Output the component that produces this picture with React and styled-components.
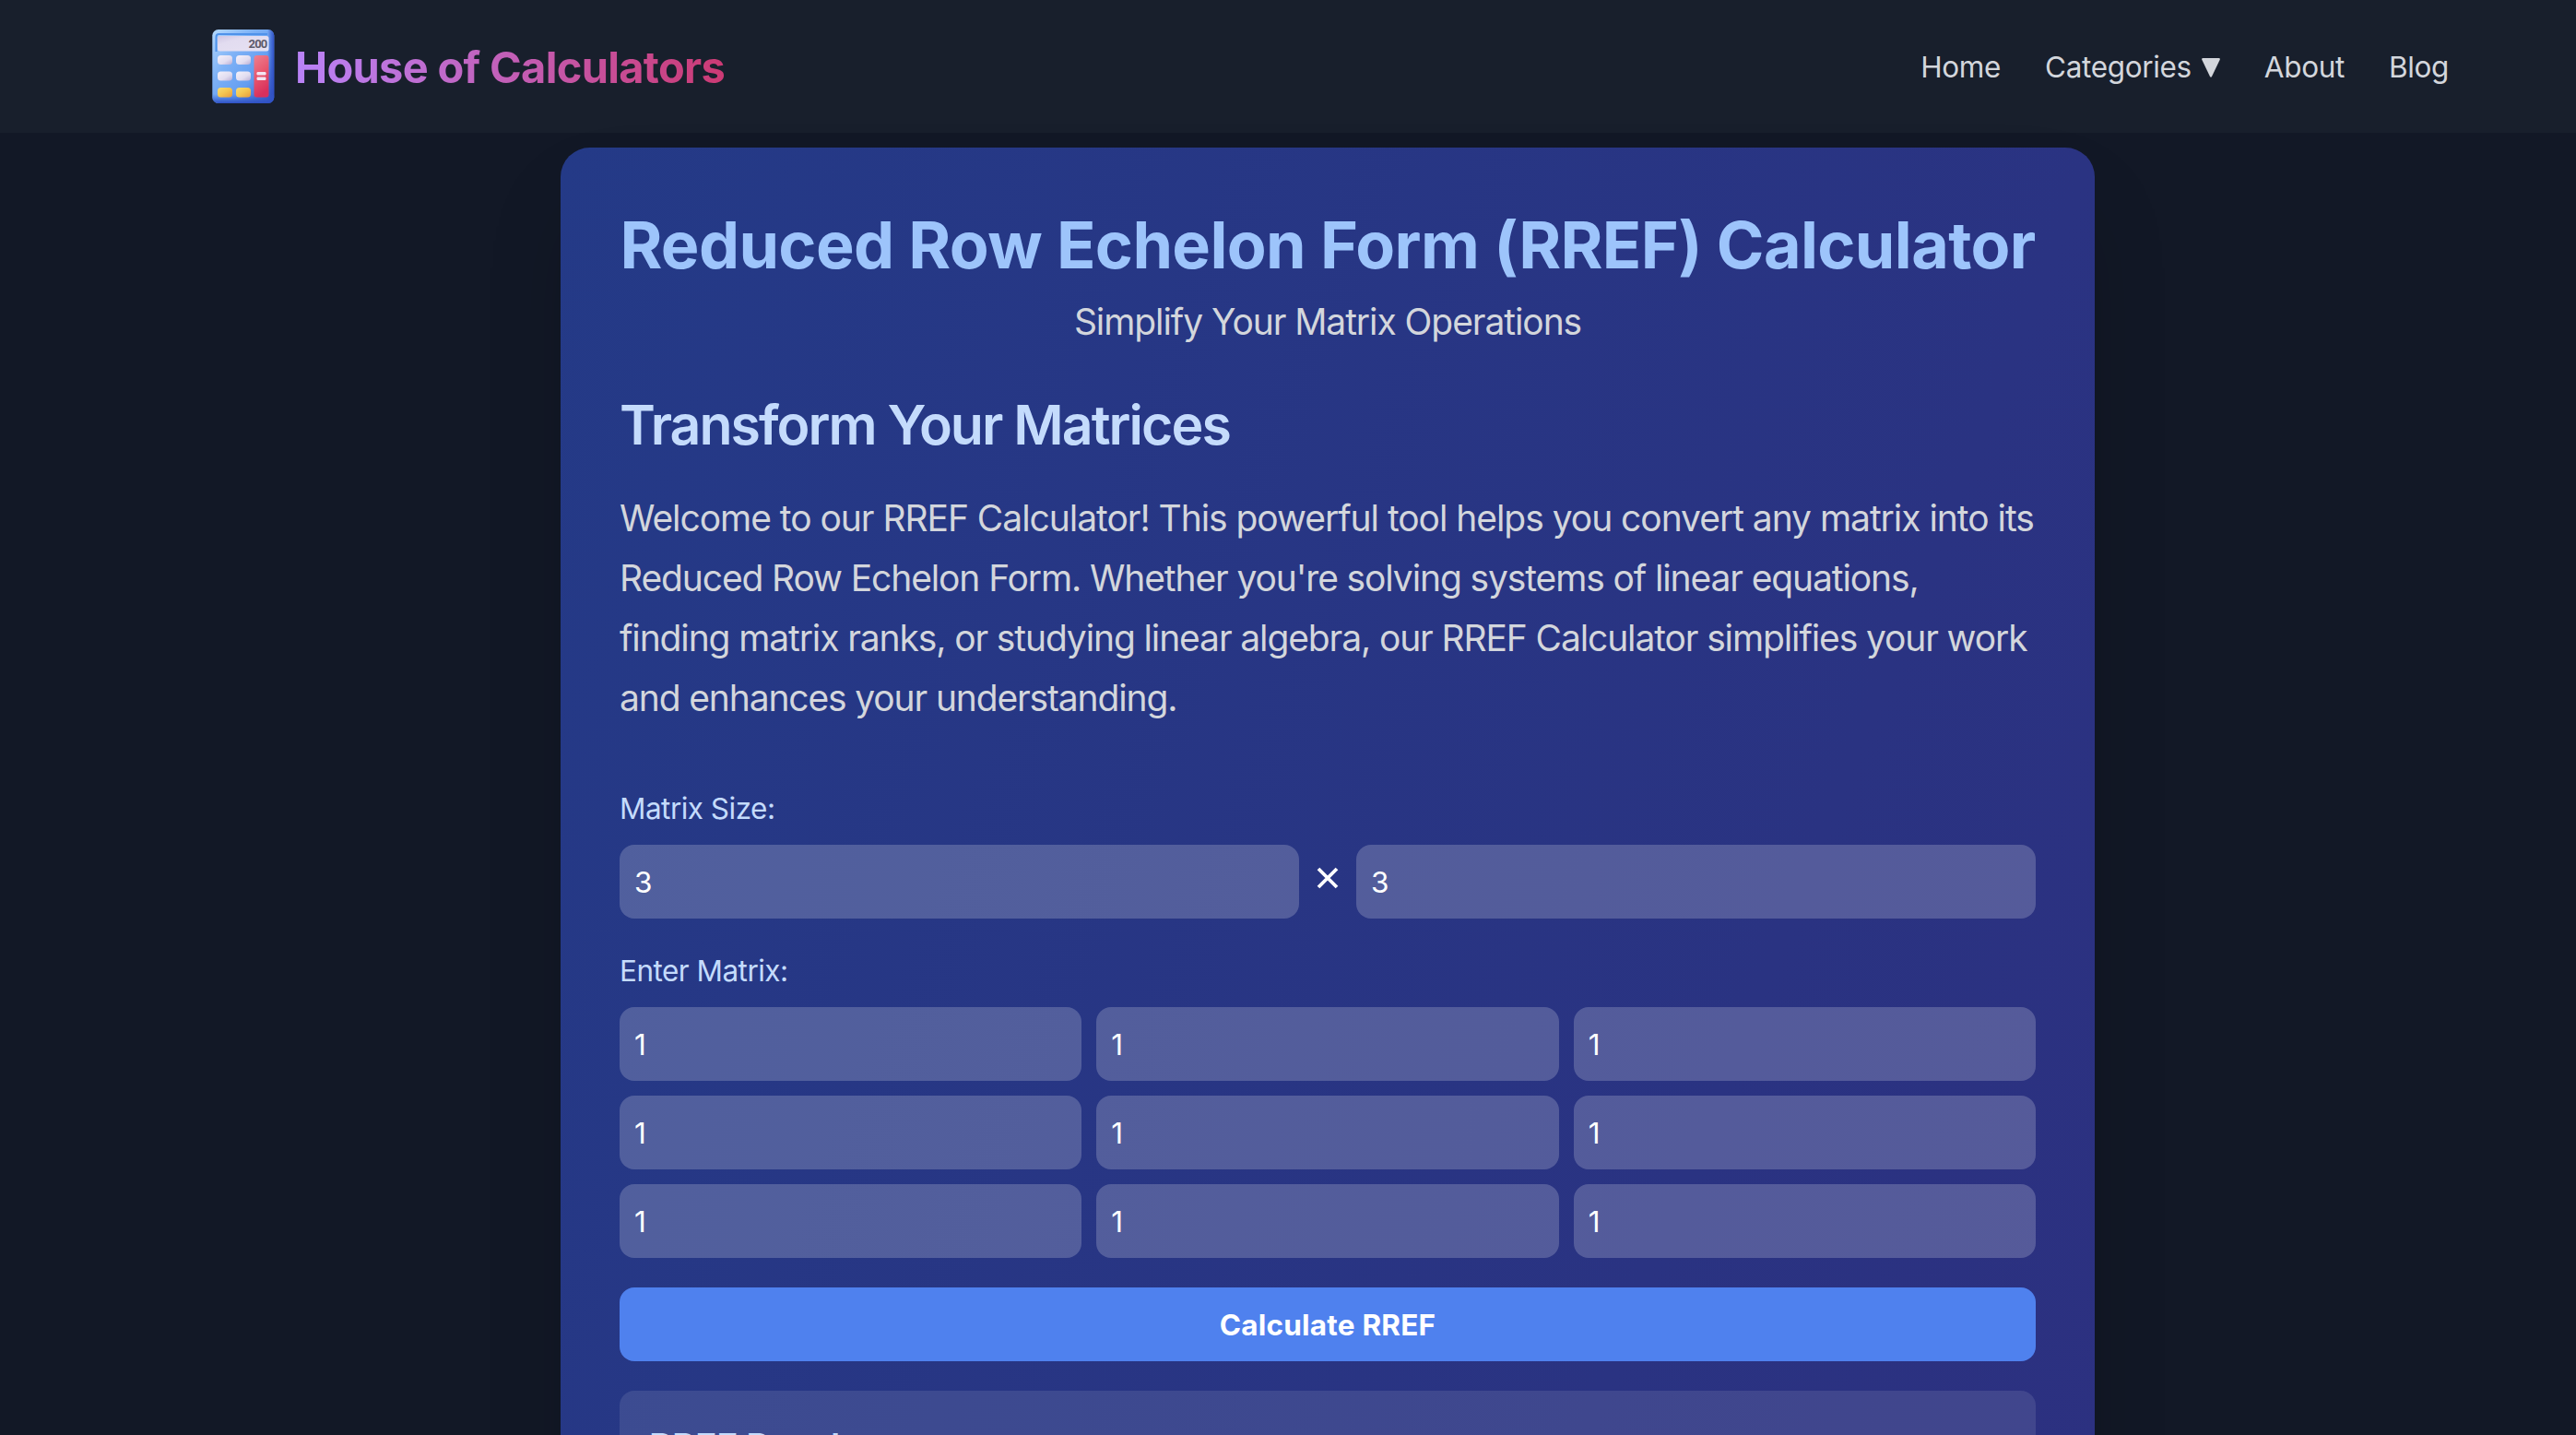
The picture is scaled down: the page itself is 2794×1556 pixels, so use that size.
import React, { useState } from "react";
import styled, { createGlobalStyle } from "styled-components";

const NAV_ITEMS = ["Home", "Categories", "About", "Blog"];

const makeMatrix = (rows, cols) =>
  Array.from({ length: rows }, () => Array(cols).fill("1"));

const CalculatorLogo = () => (
  <svg width="80" height="80" viewBox="0 0 80 80">
    <defs>
      <linearGradient id="body" x1="0" y1="0" x2="1" y2="1">
        <stop offset="0" stopColor="#b4d9fd" />
        <stop offset="0.35" stopColor="#7db1f6" />
        <stop offset="0.65" stopColor="#639df1" />
        <stop offset="1" stopColor="#2c45b8" />
      </linearGradient>
      <linearGradient id="edge" x1="0" y1="0" x2="1" y2="0">
        <stop offset="0" stopColor="#2f4fc4" stopOpacity="0" />
        <stop offset="1" stopColor="#2f4fc4" />
      </linearGradient>
      <linearGradient id="base" x1="0" y1="0" x2="0" y2="1">
        <stop offset="0" stopColor="#3560d0" stopOpacity="0" />
        <stop offset="1" stopColor="#2f50c4" />
      </linearGradient>
      <linearGradient id="screen" x1="0" y1="0" x2="1" y2="1">
        <stop offset="0" stopColor="#cfc6e4" />
        <stop offset="0.3" stopColor="#e2dcf0" />
        <stop offset="1" stopColor="#e6e1f2" />
      </linearGradient>
      <linearGradient id="key" x1="0" y1="0" x2="1" y2="1">
        <stop offset="0" stopColor="#f4f1fb" />
        <stop offset="0.6" stopColor="#e2ddf0" />
        <stop offset="1" stopColor="#b9aed6" />
      </linearGradient>
      <linearGradient id="gold" x1="0" y1="0" x2="1" y2="1">
        <stop offset="0" stopColor="#f7dc72" />
        <stop offset="0.5" stopColor="#f4c550" />
        <stop offset="1" stopColor="#e79a3c" />
      </linearGradient>
      <linearGradient id="equals" x1="0" y1="0" x2="0.3" y2="1">
        <stop offset="0" stopColor="#ee8090" />
        <stop offset="0.5" stopColor="#e8586f" />
        <stop offset="1" stopColor="#d8305c" />
      </linearGradient>
    </defs>
    <rect x="6.3" y="0" width="67" height="80" rx="6.5" fill="url(#body)" />
    <path d="M66 0h.8a6.5 6.5 0 0 1 6.5 6.5v67a6.5 6.5 0 0 1-6.5 6.5H66z" fill="url(#edge)" />
    <path d="M6.3 70h67v3.5a6.5 6.5 0 0 1-6.5 6.5h-54a6.5 6.5 0 0 1-6.5-6.5z" fill="url(#base)" />
    <path d="M10.5 24V8q0-3 3-3H66" fill="none" stroke="#4f92ea" strokeWidth="2" />
    <rect x="12" y="7" width="55.5" height="16.5" rx="2.5" fill="url(#screen)" />
    <text x="65.5" y="20" textAnchor="end">200</text>
    <rect x="12" y="28" width="16" height="10" rx="3.5" fill="url(#key)" />
    <rect x="32" y="28" width="16" height="10" rx="3.5" fill="url(#key)" />
    <rect x="12" y="45.5" width="16" height="10" rx="3.5" fill="url(#key)" />
    <rect x="32" y="45.5" width="16" height="10" rx="3.5" fill="url(#key)" />
    <rect x="12" y="63" width="16" height="10.5" rx="3.5" fill="url(#gold)" />
    <rect x="32" y="63" width="16" height="10.5" rx="3.5" fill="url(#gold)" />
    <rect x="51.5" y="28" width="16" height="45.5" rx="3" fill="url(#equals)" />
    <rect x="54.5" y="46" width="10" height="3.5" rx="1.2" fill="#f3e4f2" />
    <rect x="54.5" y="51.5" width="10" height="3.5" rx="1.2" fill="#f3e4f2" />
  </svg>
);

const App = () => {
  const [rows, setRows] = useState(3);
  const [cols, setCols] = useState(3);
  const [matrix, setMatrix] = useState(makeMatrix(3, 3));

  const resize = (nextRows, nextCols) => {
    setRows(nextRows);
    setCols(nextCols);
    setMatrix(makeMatrix(Number(nextRows) || 0, Number(nextCols) || 0));
  };

  const updateCell = (row, col, value) => {
    setMatrix((prev) =>
      prev.map((cells, r) =>
        cells.map((cell, c) => (r === row && c === col ? value : cell))
      )
    );
  };

  return (
    <Page>
      <GlobalStyle />
      <Header>
        <Brand>
          <CalculatorLogo />
          <BrandName>House of Calculators</BrandName>
        </Brand>
        <Nav>
          {NAV_ITEMS.map((item) => (
            <NavLink key={item}>
              {item}
              {item === "Categories" && (
                <svg width="20" height="21" viewBox="0 0 20 21">
                  <path
                    d="M1.5 0h17q2 0 1.1 2L11 20q-1 1.6-2 0L.4 2Q-.5 0 1.5 0z"
                    fill="currentColor"
                  />
                </svg>
              )}
            </NavLink>
          ))}
        </Nav>
      </Header>
      <Card>
        <Title>Reduced Row Echelon Form (RREF) Calculator</Title>
        <Subtitle>Simplify Your Matrix Operations</Subtitle>
        <Heading>Transform Your Matrices</Heading>
        <Intro>
          <IntroLine $tracking={-1.04}>
            Welcome to our RREF Calculator! This powerful tool helps you convert any matrix into its
          </IntroLine>
          <IntroLine $tracking={-1.12}>
            Reduced Row Echelon Form. Whether you're solving systems of linear equations,
          </IntroLine>
          <IntroLine $tracking={-1.12}>
            finding matrix ranks, or studying linear algebra, our RREF Calculator simplifies your work
          </IntroLine>
          <IntroLine $tracking={-1.14}>and enhances your understanding.</IntroLine>
        </Intro>
        <Label>Matrix Size:</Label>
        <SizeRow>
          <Input value={rows} onChange={(e) => resize(e.target.value, cols)} />
          <Times>
            <svg width="24" height="24" viewBox="0 0 24 24">
              <path d="M2 2l20 20M22 2L2 22" stroke="#fff" strokeWidth="3.8" />
            </svg>
          </Times>
          <Input value={cols} onChange={(e) => resize(rows, e.target.value)} />
        </SizeRow>
        <Label>Enter Matrix:</Label>
        <MatrixGrid $cols={Number(cols) || 1}>
          {matrix.map((cells, r) =>
            cells.map((cell, c) => (
              <Input
                key={`${r}-${c}`}
                value={cell}
                onChange={(e) => updateCell(r, c, e.target.value)}
              />
            ))
          )}
        </MatrixGrid>
        <CalculateButton>Calculate RREF</CalculateButton>
        <Result>
          <ResultTitle>RREF Result:</ResultTitle>
        </Result>
      </Card>
    </Page>
  );
};

const GlobalStyle = createGlobalStyle`
  * {
    box-sizing: border-box;
    margin: 0;
  }
  body {
    font-family: Inter, "Liberation Sans", sans-serif;
    background: #121826;
    overflow: hidden;
  }
`;

const Page = styled.div`
  height: 1556px;
  overflow: hidden;
  background: #121826;
  color: #fff;
`;

const Header = styled.header`
  display: flex;
  align-items: flex-start;
  justify-content: space-between;
  height: 144px;
  padding: 32px 138px 0 224px;
  background: #181f2c;
`;

const Brand = styled.div`
  display: flex;
  align-items: center;
  gap: 16px;

  text {
    font-family: Roboto, sans-serif;
    font-size: 13px;
    font-weight: 700;
    letter-spacing: -0.8px;
    fill: #5f5c6c;
  }
`;

const BrandName = styled.span`
  padding-top: 2px;
  font-size: 47px;
  font-weight: 700;
  line-height: 64px;
  letter-spacing: -0.7px;
  color: transparent;
  background: linear-gradient(to right, #b983f8, #cc3a74);
  background-clip: text;
  -webkit-background-clip: text;
`;

const Nav = styled.nav`
  display: flex;
  gap: 48px;
  padding-top: 17px;
`;

const NavLink = styled.a`
  display: flex;
  align-items: center;
  gap: 11px;
  font-size: 31.5px;
  line-height: 48px;
  letter-spacing: -0.35px;
  color: #d3d6dc;
`;

const Card = styled.main`
  display: flex;
  flex-direction: column;
  width: 1664px;
  height: 4200px;
  margin: 16px 0 0 608px;
  padding: 66px 64px 64px;
  border-radius: 32px;
  background: linear-gradient(to bottom right, #243a87, #302c7d);
  box-shadow: 0 50px 100px -24px rgba(0, 0, 0, 0.22);
`;

const Title = styled.h1`
  font-size: 70px;
  font-weight: 700;
  line-height: 80px;
  letter-spacing: -0.64px;
  text-align: center;
  white-space: nowrap;
  color: #9dc4fb;
`;

const Subtitle = styled.p`
  margin-top: 15px;
  font-size: 39px;
  line-height: 56px;
  letter-spacing: -1.07px;
  text-align: center;
  color: #d3d6dc;
`;

const Heading = styled.h2`
  margin-top: 48px;
  font-size: 59px;
  font-weight: 600;
  line-height: 72px;
  letter-spacing: -1.97px;
  color: #c4dbfc;
`;

const Intro = styled.p`
  margin: 32px 0 64px;
  font-size: 39px;
  line-height: 65px;
  white-space: nowrap;
  color: #d3d6dc;
`;

const IntroLine = styled.span`
  display: block;
  letter-spacing: ${(props) => props.$tracking}px;
`;

const Label = styled.label`
  margin-bottom: 15px;
  font-size: 31.5px;
  line-height: 48px;
  letter-spacing: -0.52px;
  color: #c4dbfc;
`;

const SizeRow = styled.div`
  display: flex;
  align-items: center;
  margin-bottom: 33px;
`;

const Times = styled.span`
  display: flex;
  justify-content: center;
  width: 62px;
  flex-shrink: 0;
  padding-bottom: 8px;
`;

const Input = styled.input`
  flex: 1;
  min-width: 0;
  height: 80px;
  padding: 0 16px;
  border: none;
  border-radius: 16px;
  outline: none;
  font-family: inherit;
  font-size: 31.5px;
  color: #fff;
  background: rgba(255, 255, 255, 0.2);
`;

const MatrixGrid = styled.div`
  display: grid;
  grid-template-columns: repeat(${(props) => props.$cols}, 1fr);
  gap: 16px;
  margin-bottom: 32px;
`;

const CalculateButton = styled.button`
  height: 80px;
  flex-shrink: 0;
  border: none;
  border-radius: 16px;
  font-family: inherit;
  font-size: 31.5px;
  font-weight: 700;
  letter-spacing: 0.2px;
  color: #fff;
  background: #4f81ee;
`;

const Result = styled.section`
  height: 320px;
  margin-top: 32px;
  padding: 33px 32px 32px;
  border-radius: 16px;
  background: rgba(255, 255, 255, 0.1);
`;

const ResultTitle = styled.h3`
  font-size: 39px;
  font-weight: 600;
  line-height: 56px;
  letter-spacing: -0.4px;
  color: #c4dbfc;
`;

export default App;
